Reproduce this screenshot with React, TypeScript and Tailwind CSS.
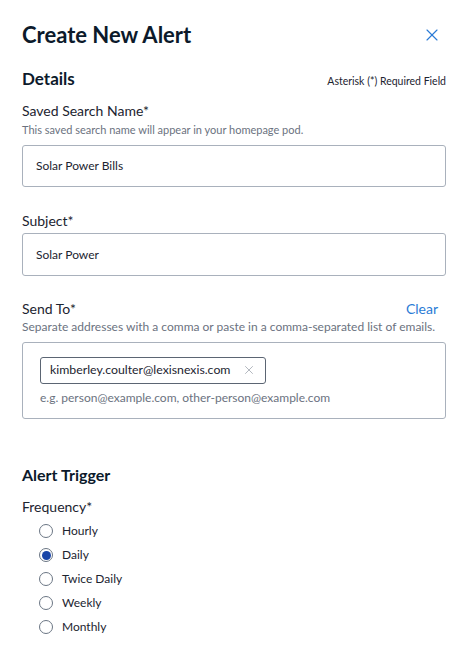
import { X } from "lucide-react";

const options = ["Hourly", "Daily", "Twice Daily", "Weekly", "Monthly"];

export default function App() {
  return (
    <div
      className="w-[466px] h-[653px] bg-white text-[#1c2430] pl-[22px] pr-[20px] pt-[22px]"
      style={{ fontFamily: "Lato, 'Noto Sans', sans-serif" }}
    >
      {/* Header */}
      <div className="flex items-center justify-between h-[26px]">
        <h1 className="text-[22px] font-bold text-[#0c1a2b] leading-none">Create New Alert</h1>
        <button className="text-[#2b7bd6] mr-[4px]">
          <X className="w-[20px] h-[20px]" strokeWidth={1.4} />
        </button>
      </div>

      {/* Details */}
      <div className="flex items-end justify-between mt-[21px]">
        <h2 className="text-[17px] font-bold text-[#0c1a2b] leading-[20px]">Details</h2>
        <span className="text-[10.5px] text-[#1c2430] leading-[16px]">Asterisk (*) Required Field</span>
      </div>

      <div className="mt-[13px] text-[14px] leading-[18px]">Saved Search Name*</div>
      <div className="mt-[3px] text-[11px] leading-[14px] text-[#6b7280]">
        This saved search name will appear in your homepage pod.
      </div>
      <div className="mt-[8px] h-[42px] border border-[#a9b1bc] rounded-[3px] flex items-center px-[13px] text-[12px]">
        Solar Power Bills
      </div>

      <div className="mt-[25px] text-[14px] leading-[18px]">Subject*</div>
      <div className="mt-[3px] h-[43px] border border-[#a9b1bc] rounded-[3px] flex items-center px-[13px] text-[12px]">
        Solar Power
      </div>

      <div className="mt-[24px] flex items-center justify-between">
        <span className="text-[14px] leading-[18px]">Send To*</span>
        <button className="text-[14px] text-[#2b7bd6] mr-[8px] leading-[18px]">Clear</button>
      </div>
      <div className="mt-[2px] text-[12px] leading-[14px] text-[#6b7280] whitespace-nowrap">
        Separate addresses with a comma or paste in a comma-separated list of emails.
      </div>
      <div className="mt-[8px] h-[77px] border border-[#a9b1bc] rounded-[3px] px-[17px] pt-[13px]">
        <div className="inline-flex items-center h-[27px] border border-[#5b6573] rounded-[3px] pl-[9px] pr-[9px] text-[12.3px]">
          <span>kimberley.coulter@lexisnexis.com</span>
          <X className="w-[14px] h-[14px] ml-[12px] text-[#9aa1ab]" strokeWidth={1.3} />
        </div>
        <div className="mt-[7px] text-[12px] text-[#6b7280] leading-[14px]">
          e.g. person@example.com, other-person@example.com
        </div>
      </div>

      {/* Alert Trigger */}
      <h2 className="mt-[46px] text-[16px] font-bold text-[#0c1a2b] leading-[20px]">Alert Trigger</h2>
      <div className="mt-[13px] text-[14px] leading-[18px]">Frequency*</div>
      <div className="mt-[3px] flex flex-col">
        {options.map((o) => (
          <label key={o} className="flex items-center h-[24px] pl-[17px]">
            <span className="w-[14px] h-[14px] rounded-full border border-[#6b7684] flex items-center justify-center">
              {o === "Daily" && <span className="w-[9px] h-[9px] rounded-full bg-[#1a46a8]" />}
            </span>
            <span className="ml-[9px] text-[12px]">{o}</span>
          </label>
        ))}
      </div>
    </div>
  );
}
